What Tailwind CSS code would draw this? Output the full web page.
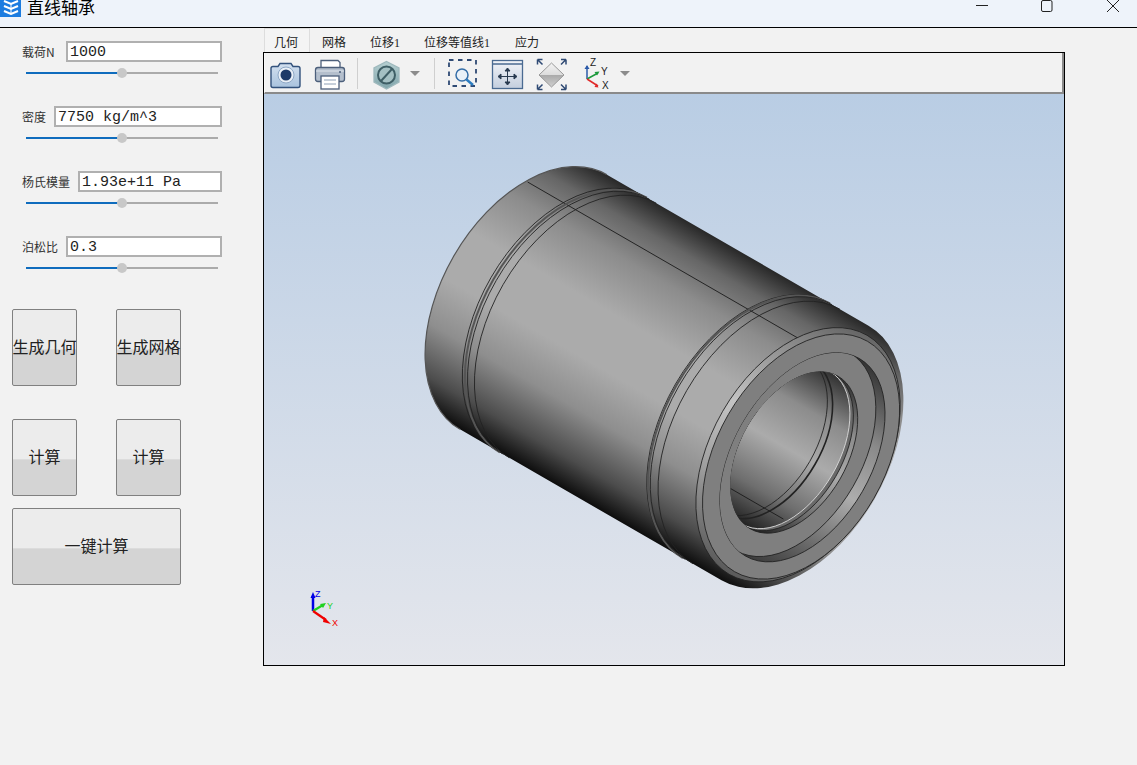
<!DOCTYPE html>
<html lang="en">
<head>
  <meta charset="UTF-8" />
  <title>直线轴承</title>
  <script src="https://cdn.jsdelivr.net/npm/@tailwindcss/browser@4"></script>
</head>
<body class="bg-[#f2f2f2] font-['Noto_Sans_CJK_SC',sans-serif] text-[#222]">
<div class="w-[1137px] h-[765px] overflow-hidden flex flex-col">

  <!-- title bar -->
  <div class="h-[28px] shrink-0 flex items-start bg-[#eef3fa] border-b border-black">
    <div class="w-[21px] h-[17px] bg-[#1c7ce0] flex items-start justify-center">
      <svg width="16" height="15" viewBox="0 0 16 15" fill="none" stroke="#fff" stroke-width="2"><path d="M1 1 8 4 15 1M1 6l7 3 7-3M1 11l7 3 7-3"/><path d="M8 4v10" stroke-width="1"/></svg>
    </div>
    <div class="ml-[6px] text-[17px] leading-[14px] text-black">直线轴承</div>
    <div class="ml-auto flex items-start">
      <svg width="14" height="12" viewBox="0 0 14 12" class="mr-[51px]" stroke="#222" fill="none"><path d="M1 5.5h12"/></svg>
      <svg width="14" height="13" viewBox="0 0 14 13" class="mr-[52px]" stroke="#222" fill="none"><rect x="1.5" y="0.5" width="10.5" height="11" rx="1.5"/></svg>
      <svg width="14" height="13" viewBox="0 0 14 13" class="mr-[17px]" stroke="#222" fill="none"><path d="M1 0l12 12M13 0 1 12"/></svg>
    </div>
  </div>

  <div class="flex flex-1">
    <!-- left panel -->
    <div class="w-[263px] shrink-0 pt-[13px] pl-[12px]">
      <div class="h-[65px]">
        <div class="flex items-center pl-[10px] w-[210px]">
          <span class="w-[44px] shrink-0 text-[12px] text-[#333] whitespace-nowrap">载荷N</span>
          <div class="flex-1 h-[21px] bg-white border-2 border-[#b0b0b0] pl-[2px] font-['Liberation_Mono',monospace] text-[15px] leading-[19px]">1000</div>
        </div>
        <div class="relative ml-[14px] mt-[10px] w-[192px] h-[2px] bg-[#ababab]">
          <div class="w-[96px] h-[2px] bg-[#0f6cbd]"></div>
          <div class="absolute left-[91px] top-[-4px] w-[10px] h-[10px] rounded-full bg-[#c8c8c8]"></div>
        </div>
      </div>
      <div class="h-[65px]">
        <div class="flex items-center pl-[10px] w-[210px]">
          <span class="w-[32px] shrink-0 text-[12px] text-[#333] whitespace-nowrap">密度</span>
          <div class="flex-1 h-[21px] bg-white border-2 border-[#b0b0b0] pl-[2px] font-['Liberation_Mono',monospace] text-[15px] leading-[19px]">7750 kg/m^3</div>
        </div>
        <div class="relative ml-[14px] mt-[10px] w-[192px] h-[2px] bg-[#ababab]">
          <div class="w-[96px] h-[2px] bg-[#0f6cbd]"></div>
          <div class="absolute left-[91px] top-[-4px] w-[10px] h-[10px] rounded-full bg-[#c8c8c8]"></div>
        </div>
      </div>
      <div class="h-[65px]">
        <div class="flex items-center pl-[10px] w-[210px]">
          <span class="w-[56px] shrink-0 text-[12px] text-[#333] whitespace-nowrap">杨氏模量</span>
          <div class="flex-1 h-[21px] bg-white border-2 border-[#b0b0b0] pl-[2px] font-['Liberation_Mono',monospace] text-[15px] leading-[19px]">1.93e+11 Pa</div>
        </div>
        <div class="relative ml-[14px] mt-[10px] w-[192px] h-[2px] bg-[#ababab]">
          <div class="w-[96px] h-[2px] bg-[#0f6cbd]"></div>
          <div class="absolute left-[91px] top-[-4px] w-[10px] h-[10px] rounded-full bg-[#c8c8c8]"></div>
        </div>
      </div>
      <div class="h-[65px]">
        <div class="flex items-center pl-[10px] w-[210px]">
          <span class="w-[44px] shrink-0 text-[12px] text-[#333] whitespace-nowrap">泊松比</span>
          <div class="flex-1 h-[21px] bg-white border-2 border-[#b0b0b0] pl-[2px] font-['Liberation_Mono',monospace] text-[15px] leading-[19px]">0.3</div>
        </div>
        <div class="relative ml-[14px] mt-[10px] w-[192px] h-[2px] bg-[#ababab]">
          <div class="w-[96px] h-[2px] bg-[#0f6cbd]"></div>
          <div class="absolute left-[91px] top-[-4px] w-[10px] h-[10px] rounded-full bg-[#c8c8c8]"></div>
        </div>
      </div>

      <div class="mt-[8px] flex gap-[39px]">
        <button class="w-[65px] h-[77px] pb-[4px] whitespace-nowrap flex items-center justify-center border border-[#808080] rounded-[2px] bg-[linear-gradient(#ececec_0%,#ececec_52%,#d4d4d4_53%,#d4d4d4_100%)] text-[16px]">生成几何</button>
        <button class="w-[65px] h-[77px] pb-[4px] whitespace-nowrap flex items-center justify-center border border-[#808080] rounded-[2px] bg-[linear-gradient(#ececec_0%,#ececec_52%,#d4d4d4_53%,#d4d4d4_100%)] text-[16px]">生成网格</button>
      </div>
      <div class="mt-[33px] flex gap-[39px]">
        <button class="w-[65px] h-[77px] pb-[4px] flex items-center justify-center border border-[#808080] rounded-[2px] bg-[linear-gradient(#ececec_0%,#ececec_52%,#d4d4d4_53%,#d4d4d4_100%)] text-[16px]">计算</button>
        <button class="w-[65px] h-[77px] pb-[4px] flex items-center justify-center border border-[#808080] rounded-[2px] bg-[linear-gradient(#ececec_0%,#ececec_52%,#d4d4d4_53%,#d4d4d4_100%)] text-[16px]">计算</button>
      </div>
      <button class="mt-[12px] w-[169px] h-[77px] pb-[4px] flex items-center justify-center border border-[#808080] rounded-[2px] bg-[linear-gradient(#ececec_0%,#ececec_52%,#d4d4d4_53%,#d4d4d4_100%)] text-[16px]">一键计算</button>
    </div>

    <!-- right side -->
    <div class="w-[802px] shrink-0">
      <div class="h-[24px] flex items-end text-[12px] leading-[18px] pl-px">
        <div class="h-[24px] pl-[9px] pt-[4px] bg-[#f4f4f4] border border-b-0 border-[#dddddd] w-[46px]">几何</div>
        <div class="h-[24px] px-[12px] pt-[5px]">网格</div>
        <div class="h-[24px] px-[12px] pt-[5px]">位移<span class="font-['Liberation_Serif',serif]">1</span></div>
        <div class="h-[24px] px-[12px] pt-[5px]">位移等值线<span class="font-['Liberation_Serif',serif]">1</span></div>
        <div class="h-[24px] pl-[13px] pt-[5px]">应力</div>
      </div>
      <div class="h-[614px] border border-black flex flex-col">
        <!-- toolbar -->
        <div class="h-[41px] shrink-0 bg-[#f2f2f2] border-b-2 border-r-2 border-[#8a8a8a] border-l border-l-[#f8f8f8] relative">
          <svg width="798" height="40" viewBox="265 53 798 40" class="block" fill="none">
            <defs>
              <linearGradient id="cam" x1="0" y1="0" x2="0" y2="1"><stop offset="0" stop-color="#d3e0ef"/><stop offset="1" stop-color="#a9c3de"/></linearGradient>
              <linearGradient id="pane" x1="0" y1="0" x2="0" y2="1"><stop offset="0" stop-color="#f2f4f8"/><stop offset="1" stop-color="#c3cede"/></linearGradient>
              <linearGradient id="hex" x1="0" y1="0" x2="0" y2="1"><stop offset="0" stop-color="#b7d0d2"/><stop offset="1" stop-color="#7fa4aa"/></linearGradient>
              <linearGradient id="dia" x1="0" y1="0" x2="0" y2="1"><stop offset="0" stop-color="#f3f3f3"/><stop offset="0.5" stop-color="#dcdcdc"/><stop offset="0.5" stop-color="#a9a9a9"/><stop offset="1" stop-color="#d0d0d0"/></linearGradient>
            </defs>
            <!-- camera -->
            <path d="M271 68.5q0-2 2-2h5l2-3h11l2 3h5q2 0 2 2v17q0 2-2 2h-25q-2 0-2-2z" fill="url(#cam)" stroke="#33527c" stroke-width="1.4"/>
            <circle cx="286" cy="75" r="8" fill="#eaf0f7" stroke="#8ea8c6"/>
            <circle cx="286" cy="75" r="5.5" fill="#1d3a68"/>
            <!-- printer -->
            <path d="M321 68v-7.500h17l2 2v5.500" fill="#fff" stroke="#4c5f7b" stroke-width="1.3"/>
            <rect x="315.500" y="67.500" width="29" height="14" rx="2.500" fill="#b4bfcd" stroke="#4c5f7b" stroke-width="1.300"/>
            <path d="M316 71h28" stroke="#dfe5ec"/><circle cx="340" cy="72" r="1" fill="#4c5f7b"/>
            <rect x="321" y="76" width="18" height="13" fill="#fff" stroke="#4c5f7b" stroke-width="1.300"/>
            <path d="M324 80h12M324 84h12" stroke="#8ea0b6"/>
            <path d="M357.500 58v31" stroke="#cfcfcf"/>
            <!-- hexagon stop -->
            <path d="M386.500 61.500 399 68v14l-12.500 7L374 82V68z" fill="url(#hex)" stroke="#9eb9bd" stroke-width="1.300"/>
            <circle cx="386.500" cy="75" r="8.500" fill="#a4c0c3" stroke="#3f5f66" stroke-width="2"/>
            <path d="M381 81l11-12" stroke="#3f5f66" stroke-width="2"/>
            <path d="M410 71h10l-5 5z" fill="#8c8c8c"/>
            <path d="M434.500 58v31" stroke="#cfcfcf"/>
            <!-- zoom box -->
            <rect x="449" y="60" width="27" height="26" stroke="#2f4a74" stroke-width="1.800" stroke-dasharray="4.500 4.500"/>
            <circle cx="462" cy="75" r="6" fill="#eaf1f8" stroke="#356ea8" stroke-width="1.500"/>
            <path d="M466.500 79.500l6.500 5.500" stroke="#2b7cc0" stroke-width="2.500"/>
            <!-- fit -->
            <rect x="492.500" y="60.500" width="30" height="28" fill="url(#pane)" stroke="#4a6a91" stroke-width="1.300"/>
            <path d="M493 64h29" stroke="#4a6a91" stroke-width="1.500"/>
            <path d="M507.500 68l-2.500 3h5zM507.500 85l-2.500-3h5zM498 76.500l3-2.500v5zM517 76.500l-3-2.500v5z" fill="#27394f" stroke="#27394f"/>
            <path d="M507.500 71v11M501 76.500h13" stroke="#27394f"/>
            <!-- diamond -->
            <path d="M551.500 63 564 75 551.500 87 539 75z" fill="url(#dia)" stroke="#999" />
            <path d="M537.500 59.500h5M537.500 59.500v5M537.500 59.500l5 5M566 59.500h-5M566 59.500v5M566 59.500l-5 5M537.500 89.500h5M537.500 89.500v-5M537.500 89.500l5-5M566 89.500h-5M566 89.500v-5M566 89.500l-5-5" stroke="#2f4a74" stroke-width="1.500"/>
            <!-- axis -->
            <path d="M587 79V66" stroke="#2b5aa8" stroke-width="1.500"/><path d="M584.500 69l2.500-4 2.500 4z" fill="#2b5aa8"/>
            <path d="M587 79l11-6" stroke="#1c9a3c" stroke-width="1.500"/><path d="M594.500 72l5-.5-2.500 4z" fill="#1c9a3c"/>
            <path d="M587 79l11 7" stroke="#e02a2a" stroke-width="1.500"/><path d="M594.500 87l4 .5-2-4z" fill="#e02a2a"/>
            <text x="590" y="66" font-family="Liberation Sans" font-size="10" fill="#222">Z</text>
            <text x="601" y="75" font-family="Liberation Sans" font-size="10" fill="#222">Y</text>
            <text x="602" y="89" font-family="Liberation Sans" font-size="10" fill="#222">X</text>
            <path d="M620 71h10l-5 5z" fill="#8c8c8c"/>
          </svg>
        </div>
        <!-- 3d viewport -->
        <div class="flex-1 bg-[linear-gradient(#b9cde4,#e4e6ec)] overflow-hidden">
          <svg width="800" height="570" viewBox="264 94 800 570" class="block" fill="none">
            <defs>
              <linearGradient id="body" gradientUnits="userSpaceOnUse" x1="-147" y1="0" x2="147" y2="0">
                <stop offset="0" stop-color="#0d0d0d"/>
                <stop offset="0.1" stop-color="#4c4c4c"/>
                <stop offset="0.26" stop-color="#8e8e8e"/>
                <stop offset="0.42" stop-color="#ababab"/>
                <stop offset="0.6" stop-color="#ababab"/>
                <stop offset="0.78" stop-color="#8c8c8c"/>
                <stop offset="0.9" stop-color="#666"/>
                <stop offset="1" stop-color="#282828"/>
              </linearGradient>
              <linearGradient id="band" gradientUnits="userSpaceOnUse" x1="-138" y1="0" x2="138" y2="0">
                <stop offset="0" stop-color="#5a5a5a"/>
                <stop offset="0.3" stop-color="#a0a0a0"/>
                <stop offset="0.55" stop-color="#c4c4c4"/>
                <stop offset="0.82" stop-color="#8e8e8e"/>
                <stop offset="1" stop-color="#666"/>
              </linearGradient>
              <linearGradient id="wall" gradientUnits="userSpaceOnUse" x1="-114" y1="0" x2="114" y2="0">
                <stop offset="0" stop-color="#3c3c3c"/>
                <stop offset="0.45" stop-color="#adadad"/>
                <stop offset="0.7" stop-color="#8a8a8a"/>
                <stop offset="1" stop-color="#333"/>
              </linearGradient>
              <linearGradient id="bore" gradientUnits="userSpaceOnUse" x1="-88" y1="0" x2="88" y2="0">
                <stop offset="0" stop-color="#222"/>
                <stop offset="0.22" stop-color="#6e6e6e"/>
                <stop offset="0.5" stop-color="#ababab"/>
                <stop offset="0.75" stop-color="#8c8c8c"/>
                <stop offset="1" stop-color="#303030"/>
              </linearGradient>
              <clipPath id="recessClip"><ellipse cx="0" cy="8.600" rx="114" ry="69"/></clipPath>
              <clipPath id="boreClip"><ellipse cx="0" cy="-1" rx="88" ry="53"/></clipPath>
            </defs>

            <g transform="translate(795 453) rotate(-60)">
              <!-- body -->
              <path d="M-147 0V-302A147 92 0 0 1 147 -302V0A147 92 0 0 1 -147 0Z" fill="url(#body)"/>
              <path d="M-147 -302A147 92 0 0 1 147 -302" stroke="#555" stroke-width="1.200"/>
              <!-- seam -->
              <path d="M101 -367 101 -53" stroke="#1a1a1a" stroke-width="0.800"/>
              <!-- back groove -->
              <path d="M-147 -259A147 92 0 0 1 147 -259" stroke="#222" stroke-width="0.800"/>
              <path d="M-147 -256A147 92 0 0 1 147 -256" stroke="#555" stroke-width="2"/>
              <path d="M-147 -253A147 92 0 0 1 147 -253" stroke="#222" stroke-width="0.800"/>
              <path d="M-147 -245A147 92 0 0 1 147 -245" stroke="#222" stroke-width="0.800"/>
              <!-- front groove -->
              <path d="M-147 -46A147 92 0 0 1 147 -46" stroke="#222" stroke-width="0.800"/>
              <path d="M-147 -44.500A147 92 0 0 1 147 -44.500" stroke="#555" stroke-width="2"/>
              <path d="M-147 -42A147 92 0 0 1 147 -42" stroke="#222" stroke-width="0.800"/>
              <path d="M-147 -33A147 92 0 0 1 147 -33" stroke="#222" stroke-width="0.800"/>
              <!-- chamfer and face -->
              <ellipse cx="0" cy="3.500" rx="138" ry="87" fill="url(#band)" stroke="#222" stroke-width="0.800"/>
              <ellipse cx="0" cy="7" rx="133" ry="84" fill="#7f7f7f" stroke="#222" stroke-width="0.800"/>
              <!-- recess -->
              <ellipse cx="0" cy="8.600" rx="114" ry="69" fill="url(#wall)" stroke="#222" stroke-width="0.800"/>
              <g clip-path="url(#recessClip)">
                <ellipse cx="0" cy="-2" rx="114" ry="69" fill="#7f7f7f" stroke="#222" stroke-width="0.800"/>
              </g>
              <!-- bore -->
              <ellipse cx="0" cy="-1" rx="88" ry="53" fill="url(#bore)" stroke="#222" stroke-width="0.800"/>
              <g clip-path="url(#boreClip)">
                <ellipse cx="0" cy="-6" rx="88" ry="53" fill="#6a6a6a" stroke="#222" stroke-width="0.800"/>
                <ellipse cx="0" cy="-10" rx="88" ry="53" fill="url(#bore)" stroke="#ddd" stroke-width="0.800"/>
                <ellipse cx="0" cy="-30" rx="88" ry="53" fill="url(#bore)" stroke="#222" stroke-width="1.600"/>
                <ellipse cx="0" cy="-36" rx="88" ry="53" fill="url(#bore)" stroke="#222" stroke-width="0.800"/>
                <path d="M-63 -38 -63 23" stroke="#1a1a1a" stroke-width="0.800"/>
              </g>
            </g>

            <!-- triad -->
            <path d="M313 611V596" stroke="#0000e6" stroke-width="2.500"/><path d="M310.500 598l2.500-6 2.500 6z" fill="#0000e6"/>
            <path d="M313 611l10-6" stroke="#1fd11f" stroke-width="2.200"/><path d="M320 604l6-1-3 5z" fill="#1fd11f"/>
            <path d="M313 611l13 9" stroke="#f00000" stroke-width="2.200"/><path d="M324 617l7 7-8-2z" fill="#f00000"/>
            <text x="315" y="597" font-family="Liberation Sans" font-size="9" fill="#0000e6">Z</text>
            <text x="327" y="609" font-family="Liberation Sans" font-size="9" fill="#1fd11f">Y</text>
            <text x="332" y="626" font-family="Liberation Sans" font-size="9" fill="#f00000">X</text>
          </svg>
        </div>
      </div>
    </div>
  </div>
</div>
</body>
</html>
